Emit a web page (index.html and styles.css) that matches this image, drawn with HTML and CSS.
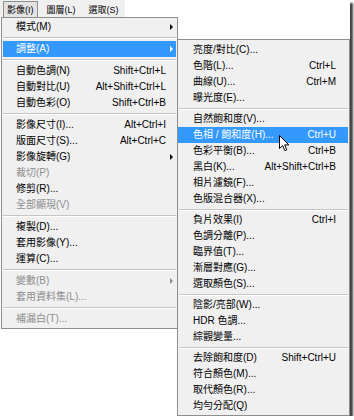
FILE: index.html
```html
<!DOCTYPE html>
<html lang="zh-Hant">
<head>
  <meta charset="UTF-8" />
  <meta name="viewport" content="width=device-width, initial-scale=1.0" />
  <title>影像選單</title>
  <link rel="stylesheet" href="styles.css">
</head>
<body>

  <div class="frame">

    <!-- Menu bar -->
    <div class="menubar">
      <span class="bar-item open">影像(I)</span>
      <span class="bar-item">圖層(L)</span>
      <span class="bar-item">選取(S)</span>
    </div>

    <div class="menus">

      <!-- Image menu -->
      <div class="menu main">
        <div class="item"><span>模式(M)</span><span></span><span class="arrow"></span></div>
        <div class="sep"></div>
        <div class="item active"><span>調整(A)</span><span></span><span class="arrow"></span></div>
        <div class="sep"></div>
        <div class="item"><span>自動色調(N)</span><span>Shift+Ctrl+L</span></div>
        <div class="item"><span>自動對比(U)</span><span>Alt+Shift+Ctrl+L</span></div>
        <div class="item"><span>自動色彩(O)</span><span>Shift+Ctrl+B</span></div>
        <div class="sep"></div>
        <div class="item"><span>影像尺寸(I)...</span><span>Alt+Ctrl+I</span></div>
        <div class="item"><span>版面尺寸(S)...</span><span>Alt+Ctrl+C</span></div>
        <div class="item"><span>影像旋轉(G)</span><span></span><span class="arrow"></span></div>
        <div class="item off"><span>裁切(P)</span></div>
        <div class="item"><span>修剪(R)...</span></div>
        <div class="item off"><span>全部顯現(V)</span></div>
        <div class="sep"></div>
        <div class="item"><span>複製(D)...</span></div>
        <div class="item"><span>套用影像(Y)...</span></div>
        <div class="item"><span>運算(C)...</span></div>
        <div class="sep"></div>
        <div class="item off"><span>變數(B)</span><span></span><span class="arrow"></span></div>
        <div class="item off"><span>套用資料集(L)...</span></div>
        <div class="sep"></div>
        <div class="item off"><span>補漏白(T)...</span></div>
      </div>

      <!-- Adjustments submenu -->
      <div class="menu sub">
        <div class="item"><span>亮度/對比(C)...</span></div>
        <div class="item"><span>色階(L)...</span><span>Ctrl+L</span></div>
        <div class="item"><span>曲線(U)...</span><span>Ctrl+M</span></div>
        <div class="item"><span>曝光度(E)...</span></div>
        <div class="sep"></div>
        <div class="item"><span>自然飽和度(V)...</span></div>
        <div class="item active"><span>色相 / 飽和度(H)...</span><span>Ctrl+U</span></div>
        <div class="item"><span>色彩平衡(B)...</span><span>Ctrl+B</span></div>
        <div class="item"><span>黑白(K)...</span><span>Alt+Shift+Ctrl+B</span></div>
        <div class="item"><span>相片濾鏡(F)...</span></div>
        <div class="item"><span>色版混合器(X)...</span></div>
        <div class="sep"></div>
        <div class="item"><span>負片效果(I)</span><span>Ctrl+I</span></div>
        <div class="item"><span>色調分離(P)...</span></div>
        <div class="item"><span>臨界值(T)...</span></div>
        <div class="item"><span>漸層對應(G)...</span></div>
        <div class="item"><span>選取顏色(S)...</span></div>
        <div class="sep"></div>
        <div class="item"><span>陰影/亮部(W)...</span></div>
        <div class="item"><span>HDR 色調...</span></div>
        <div class="item"><span>綜觀變量...</span></div>
        <div class="sep"></div>
        <div class="item"><span>去除飽和度(D)</span><span>Shift+Ctrl+U</span></div>
        <div class="item"><span>符合顏色(M)...</span></div>
        <div class="item"><span>取代顏色(R)...</span></div>
        <div class="item"><span>均勻分配(Q)</span></div>
      </div>

    </div>

    <!-- Mouse pointer -->
    <svg class="cursor" width="12" height="17" viewBox="0 0 12 17">
      <path d="M0.5 0.5 L0.5 13.5 L3.6 10.6 L5.8 15.6 L7.8 14.8 L5.7 9.9 L9.8 9.9 Z" fill="#fff" stroke="#000" stroke-width="1" stroke-linejoin="round"/>
    </svg>

  </div>

</body>
</html>
```

FILE: styles.css
```css
body {
  margin: 0;
  background: #fff;
  font-family: "Liberation Sans", "Noto Sans CJK TC", sans-serif;
  font-size: 10px;
  color: #000;
}

.frame {
  position: relative;
  width: 350px;
  height: 416px;
  background: #fff;
  box-shadow: 3px 3px 2px rgba(0,0,0,0.75);
  overflow: hidden;
}

/* menu bar */
.menubar {
  display: flex;
  gap: 5px;
  width: 125px;
  height: 17px;
  box-sizing: border-box;
  padding: 1px 0 0 3px;
  background: #f0f0f0;
  font-size: 9px;
}

.bar-item {
  height: 16px;
  line-height: 16px;
  padding: 0 3px;
  border: 1px solid transparent;
  border-bottom: none;
  box-sizing: border-box;
}

.bar-item.open {
  background: #e3e3e3;
  border-color: #8e8f8f;
}

/* menus */
.menus {
  display: flex;
  align-items: flex-start;
}

.menu {
  background: #f0f0f0;
  border: 1px solid #8e8e8e;
  box-sizing: border-box;
}

.main {
  width: 177px;
  margin-left: 1px;
  padding: 1px 1px 1px 1px;
}

.sub {
  width: 173px;
  margin-left: -1px;
  margin-top: 22px;
  padding: 2px 1px 1px 0;
  position: relative;
}

.item {
  display: grid;
  grid-template-columns: 1fr auto 10px;
  align-items: center;
  height: 16px;
  line-height: 16px;
  padding-left: 13px;
  white-space: nowrap;
}

.sub .item {
  grid-template-columns: 1fr auto;
  padding: 0 12px 0 15px;
}

.item.active {
  background: #3399ff;
  color: #fff;
}

.item.off {
  color: #8d8d8d;
}

.arrow {
  justify-self: center;
  width: 0;
  height: 0;
  border-left: 3px solid #000;
  border-top: 3px solid transparent;
  border-bottom: 3px solid transparent;
}

.active .arrow {
  border-left-color: #fff;
}

.off .arrow {
  border-left-color: #8d8d8d;
}

.sep {
  margin: 2px 0;
  border-top: 1px solid #c5c5c5;
  border-bottom: 1px solid #fff;
}

.sub .sep {
  margin: 2px 0 1px 1px;
}

.cursor {
  position: absolute;
  left: 279px;
  top: 135px;
}
```
